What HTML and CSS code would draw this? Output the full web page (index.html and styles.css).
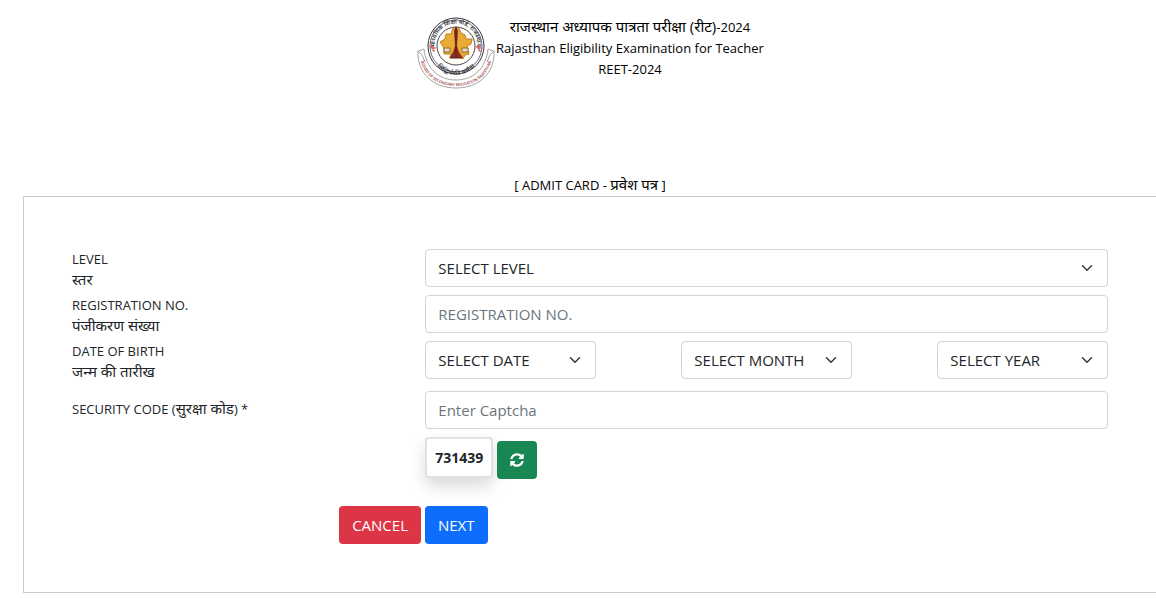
FILE: index.html
```html
<!DOCTYPE html>
<html lang="en">
<head>
	<meta charset="UTF-8">
	<meta name="viewport" content="width=device-width, initial-scale=1">
	<title>REET-2024 Admit Card</title>
	<link rel="stylesheet" href="styles.css">
</head>
<body>
	<header class="header">
		<svg class="logo" viewBox="0 0 80 80" aria-hidden="true">
			<defs>
				<path id="ringTop" d="M20 39 A21 21 0 1 1 60 39"/>
				<path id="ringBottom" d="M15 38 A25 25 0 0 0 65 38"/>
				<path id="ribbonLine" d="M4 46 C8 65 22 74 40 74 S72 65 76 46"/>
			</defs>
			<!-- ribbon -->
			<path d="M2 39 L8 37 C10 56 22 68 40 68 S70 56 72 37 L78 39 C79 62 62 76 40 76 S1 62 2 39 Z" fill="#fff" stroke="#a3a3a3" stroke-width="1"/>
			<path d="M2 39 L6 43 L9 50 M78 39 L74 43 L71 50" fill="none" stroke="#a3a3a3"/>
			<text class="logo-ribbon"><textPath href="#ribbonLine" startOffset="50%">BOARD OF SECONDARY EDUCATION RAJASTHAN</textPath></text>
			<!-- seal -->
			<circle cx="40" cy="34" r="28" fill="#fff" stroke="#33333c" stroke-width="1"/>
			<circle cx="40" cy="34" r="26" fill="none" stroke="#6b6b78" stroke-width="1"/>
			<circle cx="40" cy="34" r="19" fill="#fffdf5" stroke="#44444e" stroke-width="1"/>
			<text class="logo-ring"><textPath href="#ringTop" startOffset="50%">माध्यमिक शिक्षा बोर्ड, राजस्थान</textPath></text>
			<text class="logo-ring"><textPath href="#ringBottom" startOffset="50%">सिद्धिर्भवति कर्मजा</textPath></text>
			<path d="M17 34v5M15 36h5M15 36v-2h2M17 39h2M63 34v5M61 36h5M61 36v-2h2M63 39h2" fill="none" stroke="#d03b3b" stroke-width="1"/>
			<!-- map and lamp -->
			<path d="M24 30 L29 27 L30 22 L35 22 L37 16 L43 16 L45 21 L49 23 L50 27 L56 27 L55 32 L51 34 L53 42 L49 43 L47 47 L42 44 L37 46 L34 42 L28 42 L28 36 Z" fill="#e9ab33" stroke="#b9822a" stroke-width="1"/>
			<path d="M40 14 L42 19 L41 34 L43 40 L47 46 L33 46 L37 40 L39 34 L38 19 Z" fill="#8e2c20"/>
			<path d="M40 15v30M34 46h12" stroke="#56201b" stroke-width="1"/>
			<path d="M28 36h6v4h-6zM46 36h6v4h-6z" fill="#e6dcc4" stroke="#8d6a32" stroke-width="1"/>
		</svg>
		<div class="header-text">
			<div><span class="hi" lang="hi">राजस्थान अध्यापक पात्रता परीक्षा (रीट)</span>-2024</div>
			<div>Rajasthan Eligibility Examination for Teacher</div>
			<div>REET-2024</div>
		</div>
	</header>

	<main class="main">
		<div class="title">[ ADMIT CARD - <span class="hi" lang="hi">प्रवेश पत्र</span> ]</div>
		<form class="card">
			<div class="row">
				<label class="label" for="level">LEVEL<br><span class="hi" lang="hi">स्तर</span></label>
				<div class="field">
					<select class="select" id="level">
						<option>SELECT LEVEL</option>
					</select>
				</div>
			</div>
			<div class="row">
				<label class="label" for="regNo">REGISTRATION NO.<br><span class="hi" lang="hi">पंजीकरण संख्या</span></label>
				<div class="field">
					<input class="input" type="text" id="regNo" placeholder="REGISTRATION NO.">
				</div>
			</div>
			<div class="row">
				<label class="label" for="dobDate">DATE OF BIRTH<br><span class="hi" lang="hi">जन्म की तारीख</span></label>
				<div class="field dob">
					<select class="select" id="dobDate">
						<option>SELECT DATE</option>
					</select>
					<select class="select" id="dobMonth" aria-label="Month of birth">
						<option>SELECT MONTH</option>
					</select>
					<select class="select" id="dobYear" aria-label="Year of birth">
						<option>SELECT YEAR</option>
					</select>
				</div>
			</div>
			<div class="row security">
				<label class="label" for="captcha">SECURITY CODE (<span class="hi" lang="hi">सुरक्षा कोड</span>) *</label>
				<div class="field">
					<input class="input" type="text" id="captcha" placeholder="Enter Captcha">
					<div class="captcha">
						<span class="code">731439</span>
						<button class="btn refresh" type="button" aria-label="Refresh captcha">
							<svg viewBox="0 0 512 512" width="16" height="16" fill="currentColor" aria-hidden="true">
								<path d="M370 133C339 104 299 88 256 88c-77 0-144 53-163 127-1 5-6 9-12 9H24c-7 0-13-7-12-14C33 94 135 8 256 8c66 0 127 26 171 69l36-36c15-15 41-4 41 17v134c0 13-11 24-24 24H346c-21 0-32-26-17-41l41-42zM32 296h134c21 0 32 26 17 41l-41 42c31 29 71 45 114 45 77 0 144-53 163-127 1-5 6-9 12-9h57c7 0 13 7 12 14-21 116-123 202-244 202-66 0-127-26-171-69l-36 36c-15 15-41 4-41-17V320c0-13 11-24 24-24z"/>
							</svg>
						</button>
					</div>
				</div>
			</div>
			<div class="row">
				<div class="actions">
					<button class="btn cancel" type="button">CANCEL</button>
					<button class="btn next" type="button">NEXT</button>
				</div>
			</div>
		</form>
	</main>
</body>
</html>
```

FILE: styles.css
```css
*{
	box-sizing: border-box;
}
body{
	margin: 0;
	background-color: #fff;
	color: #212529;
	font-family: "Open Sans", "Noto Sans", sans-serif;
	font-size: 13px;
	line-height: 21px;
	overflow-x: hidden;
}
.hi{
	font-size: 15px;
	line-height: 16px;
}
.header{
	display: flex;
	justify-content: center;
	padding-top: 12px;
	margin-left: 24px;
	color: #000;
	text-align: center;
}
.logo{
	width: 80px;
	height: 80px;
}
.logo text{
	text-anchor: middle;
}
.logo-ring{
	font-size: 6px;
	font-weight: 600;
	fill: #33333b;
}
.logo-ribbon{
	font-size: 4px;
	font-weight: 600;
	fill: #a03a42;
}
.header-text{
	padding-top: 5px;
}
.main{
	margin: 83px -1px 0 23px;
}
.title{
	color: #000;
	text-align: center;
}
.card{
	border: 1px solid #ccc;
	padding: 52px 48px 44px;
}
.row{
	display: grid;
	grid-template-columns: repeat(12, 1fr);
	column-gap: 24px;
	margin-bottom: 4px;
}
.label{
	grid-column: span 4;
}
.field{
	grid-column: span 8;
}
.input,
.select{
	display: block;
	width: 100%;
	height: 38px;
	padding: 6px 12px;
	border: 1px solid #ced4da;
	border-radius: 4px;
	background-color: #fff;
	color: #212529;
	font-family: inherit;
	font-size: 15px;
	line-height: 24px;
}
.input::placeholder{
	color: #6c757d;
	opacity: 1;
}
.select{
	appearance: none;
	padding-right: 36px;
	background-image: url("data:image/svg+xml,%3csvg xmlns='http://www.w3.org/2000/svg' viewBox='0 0 16 16'%3e%3cpath fill='none' stroke='%23343a40' stroke-linecap='round' stroke-linejoin='round' stroke-width='2' d='M2 5l6 6 6-6'/%3e%3c/svg%3e");
	background-repeat: no-repeat;
	background-position: right 12px center;
	background-size: 16px 12px;
}
.dob{
	display: flex;
	justify-content: space-between;
}
.dob .select{
	width: 25%;
}
.security{
	margin-top: 8px;
}
.security .label{
	padding-top: 8px;
}
.captcha{
	display: flex;
	align-items: flex-start;
	gap: 4px;
	margin-top: 8px;
}
.code{
	padding: 8px;
	border: 2px solid #dee2e6;
	border-radius: 4px;
	background-color: #fff;
	box-shadow: 0 8px 16px rgba(0, 0, 0, .15);
	font-size: 14px;
	font-weight: 700;
}
.btn{
	height: 38px;
	padding: 6px 12px;
	border: 1px solid transparent;
	border-radius: 4px;
	color: #fff;
	font-family: inherit;
	font-size: 15px;
	line-height: 24px;
	cursor: pointer;
}
.refresh{
	display: flex;
	align-items: center;
	justify-content: center;
	width: 40px;
	margin-top: 4px;
	background-color: #198754;
}
.refresh svg{
	flex: none;
	width: 14px;
	height: 14px;
}
.actions{
	grid-column: span 8;
	display: flex;
	justify-content: center;
	gap: 4px;
	margin-top: 23px;
}
.cancel{
	background-color: #dc3545;
}
.next{
	background-color: #0d6efd;
}
```
